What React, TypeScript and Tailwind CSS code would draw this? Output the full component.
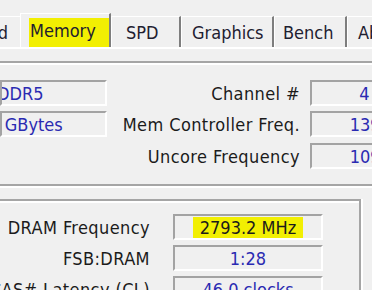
import React from "react";

const box =
  "h-[26px] shrink-0 flex items-center overflow-hidden whitespace-nowrap border-2 border-t-[#a3a3a3] border-l-[#a3a3a3] border-r-white border-b-white";
const val = "text-[#2a2ab2]";
const lbl = "flex items-center justify-end whitespace-nowrap pt-[2px] tracking-[0.4px]";

function Row({ children }: { children: React.ReactNode }) {
  return <div className="flex h-[26px] w-[486px]">{children}</div>;
}

function TRow({ label, children }: { label: string; children: React.ReactNode }) {
  return (
    <div className="flex h-[26px] w-[323px]">
      <div className={`${lbl} w-[150px] shrink-0`}>{label}</div>
      <div className={`${box} ml-[23px] w-[150px] justify-center`}>{children}</div>
    </div>
  );
}

export default function App() {
  return (
    <div className="w-[372px] h-[290px] overflow-hidden bg-[#f0f0f0] font-['DejaVu_Sans_Condensed','DejaVu_Sans',sans-serif] [font-stretch:condensed] text-[18px] leading-[18px] text-[#1b1b1b]">
      {/* tab strip */}
      <div className="flex h-[47px] items-end whitespace-nowrap text-[#1e2030]">
        <div className="flex h-[31px] w-[20px] shrink-0 items-center justify-end overflow-hidden border-t border-white pr-[12px] pt-[2px]">
          Mainboard
        </div>
        <div className="flex h-[34px] w-[91px] shrink-0 items-end border-t border-l border-white border-r-2 border-r-[#7e7e7e]">
          <div className="ml-[8px] flex h-[29px] flex-1 items-center bg-[#f2ef02] pb-[4px] pl-[1px]">Memory</div>
        </div>
        <div className="flex h-[31px] w-[70px] shrink-0 items-center border-t border-l border-white border-r-2 border-r-[#7e7e7e] pl-[14px] pt-[2px]">
          SPD
        </div>
        <div className="flex h-[31px] w-[93px] shrink-0 items-center border-t border-l border-white border-r-2 border-r-[#7e7e7e] pl-[10px] pt-[2px]">
          Graphics
        </div>
        <div className="flex h-[31px] w-[73px] shrink-0 items-center border-t border-l border-white border-r-2 border-r-[#7e7e7e] pl-[8px] pt-[2px]">
          Bench
        </div>
        <div className="flex h-[31px] w-[80px] shrink-0 items-center border-t border-l border-white pl-[10px] pt-[2px]">
          About
        </div>
      </div>
      <div className="h-[2px] bg-white" />

      {/* General group */}
      <div className="mt-[12px] h-[2px] bg-[#a5a5a5]" />
      <div className="h-[2px] bg-white" />
      <div className="flex flex-col pt-[15px]">
        <Row>
          <div className={`${box} w-[107px] pt-[2px]`}>
            <span className={`${val} ml-[-5px]`}>DDR5</span>
          </div>
          <div className={`${lbl} flex-1`}>Channel #</div>
          <div className={`${box} ml-[10px] w-[176px] justify-center pt-[2px]`}>
            <span className={val}>4 x 32-bit</span>
          </div>
        </Row>
        <div className="mt-[5px]">
          <Row>
            <div className={`${box} w-[107px] pt-[2px]`}>
              <span className={`${val} ml-[-23px]`}>32 GBytes</span>
            </div>
            <div className={`${lbl} flex-1`}>Mem Controller Freq.</div>
            <div className={`${box} ml-[10px] w-[176px] justify-center pt-[2px]`}>
              <span className={val}>1397.6 MHz</span>
            </div>
          </Row>
        </div>
        <div className="mt-[6px]">
          <Row>
            <div className="w-[107px] shrink-0" />
            <div className={`${lbl} flex-1`}>Uncore Frequency</div>
            <div className={`${box} ml-[10px] w-[176px] justify-center pt-[2px]`}>
              <span className={val}>1097.6 MHz</span>
            </div>
          </Row>
        </div>
      </div>
      <div className="mt-[15px] h-[2px] bg-[#a5a5a5]" />
      <div className="h-[2px] bg-white" />

      {/* Timings group */}
      <div className="mt-[11px] w-[361px] border-t-2 border-r-2 border-[#a5a5a5] shadow-[2px_0_0_#fff,inset_0_2px_0_#fff] pt-[13px]">
        <div className="flex flex-col gap-[5px]">
          <TRow label="DRAM Frequency">
            <div className="flex h-[21px] w-[110px] items-center justify-center bg-[#f2ef02] pt-[2px]">2793.2 MHz</div>
          </TRow>
          <TRow label="FSB:DRAM">
            <span className={`${val} pt-[2px]`}>1:28</span>
          </TRow>
          <TRow label="CAS# Latency (CL)">
            <span className={`${val} pt-[2px]`}>46.0 clocks</span>
          </TRow>
        </div>
      </div>
    </div>
  );
}
